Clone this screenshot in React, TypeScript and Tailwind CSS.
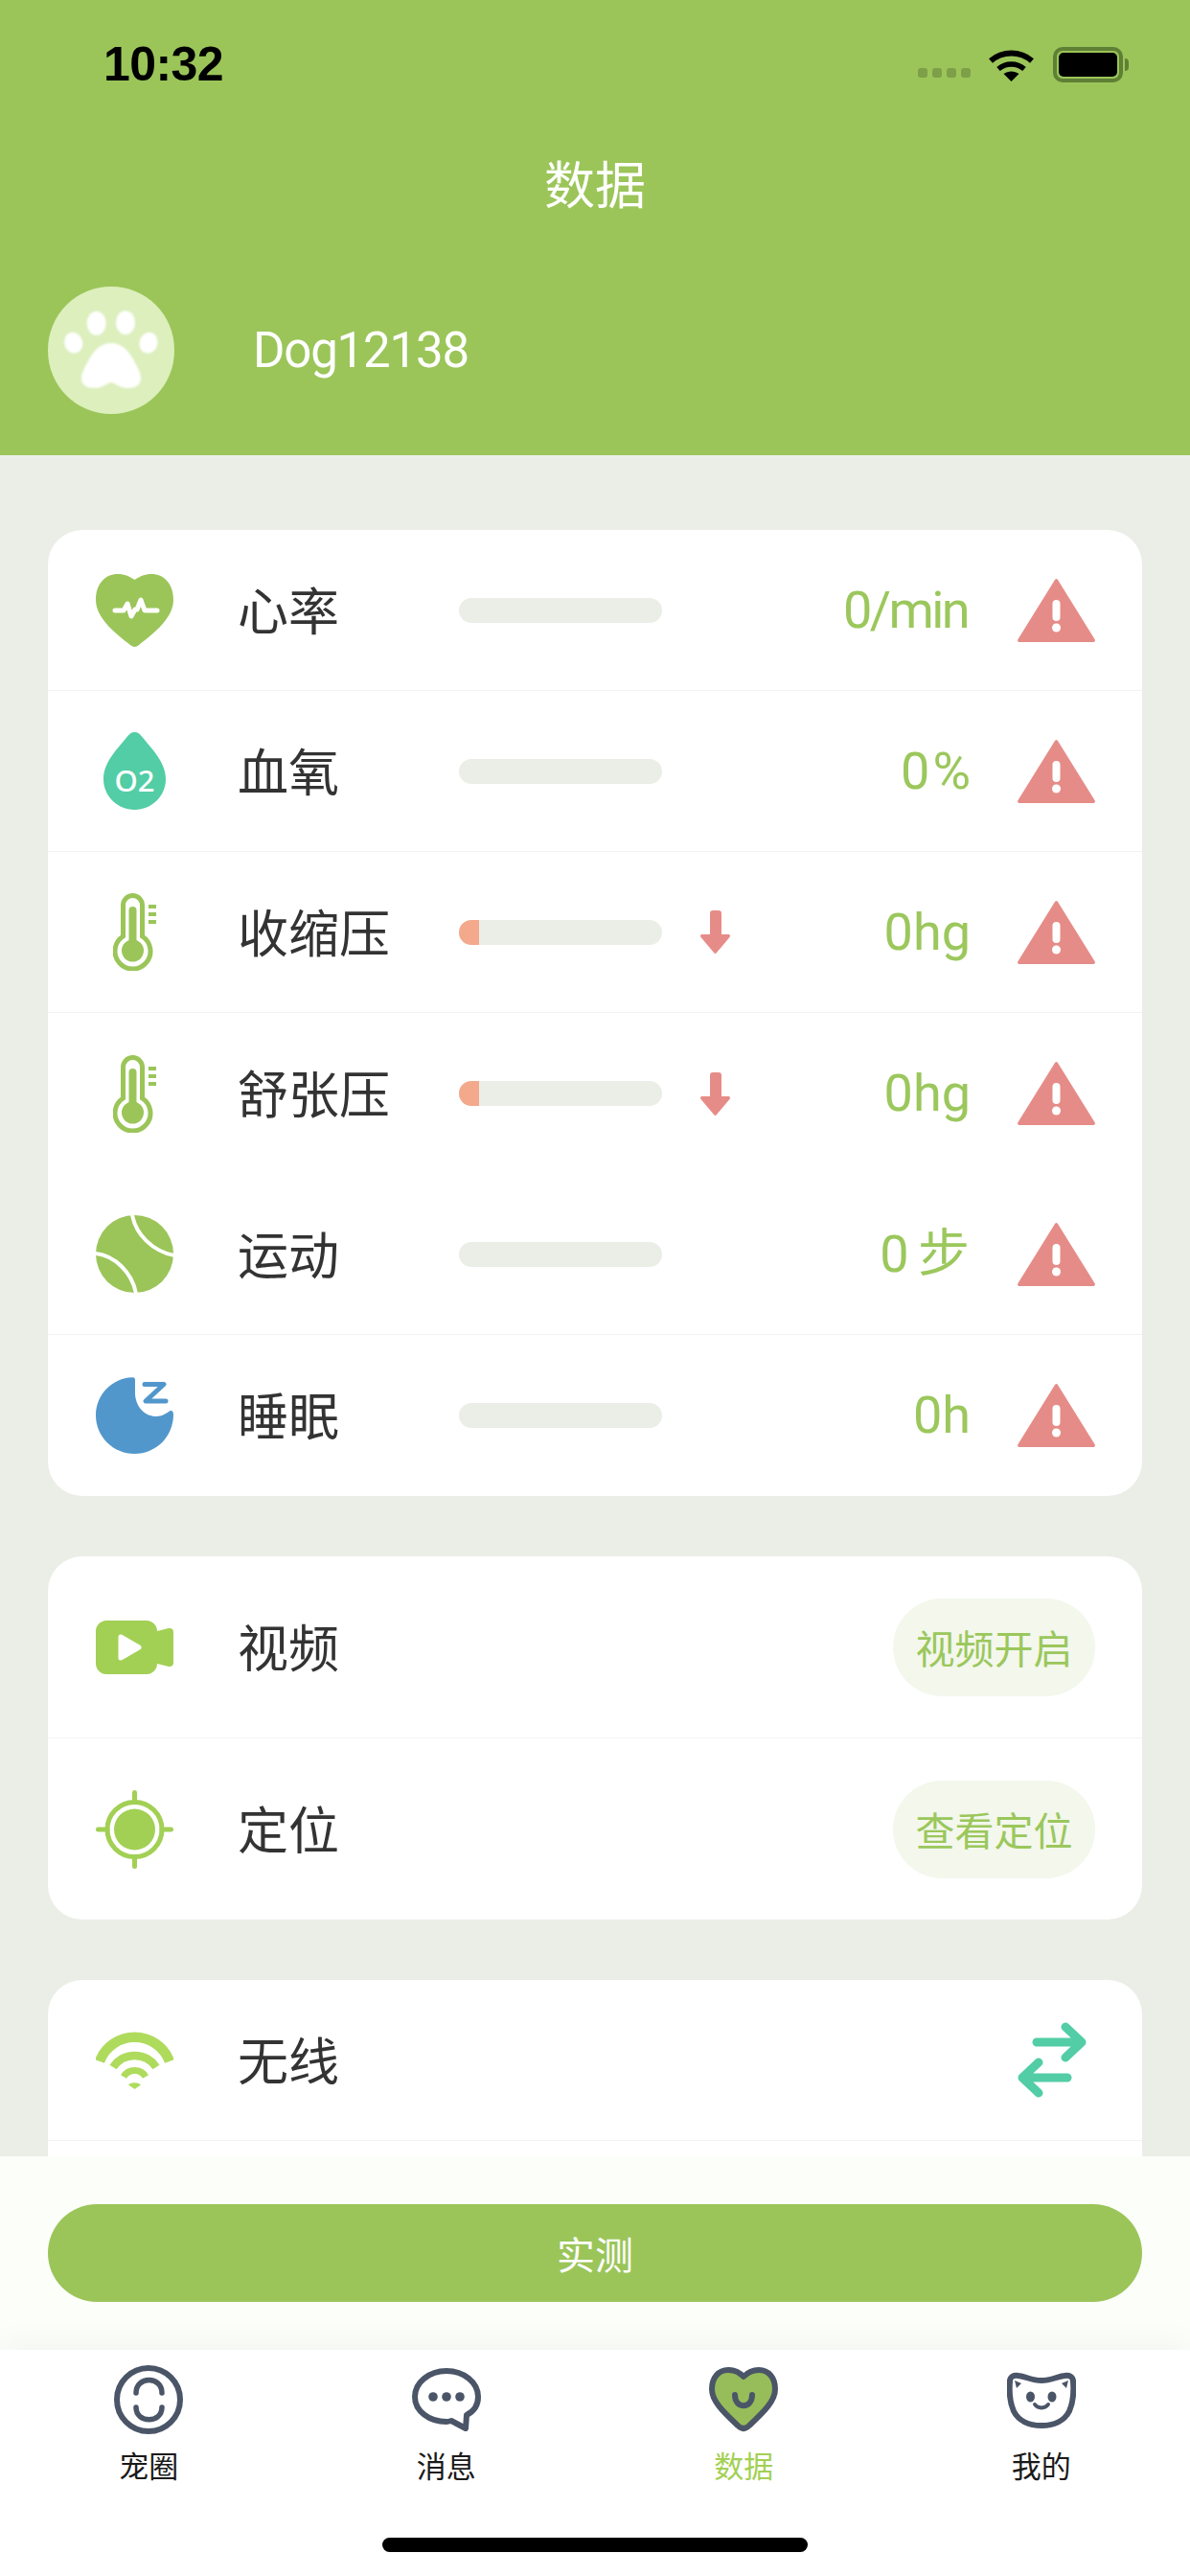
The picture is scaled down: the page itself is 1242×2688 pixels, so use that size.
import React from 'react';

const GREEN = '#9bc559';

const HeartIcon = () => (
  <svg width="81" height="76" viewBox="0 0 81 76">
    <path d="M40.5 6C34 1.5 28 0 23 0C10 0 0 10 0 27C0 45 18 60 36 74C39 76.5 42 76.5 45 74C63 60 81 45 81 27C81 10 71 0 58 0C53 0 47 1.5 40.5 6Z" fill={GREEN} />
    <path d="M20 38H29L33 31L37 44L41 37H43L47 27L51 38H64" fill="none" stroke="#fff" strokeWidth="5" strokeLinecap="round" strokeLinejoin="round" />
  </svg>
);

const DropIcon = () => (
  <svg width="65" height="81" viewBox="0 0 65 81">
    <path d="M32.5 0C29 0 27 2 25 4.5C15 17 0 31 0 49C0 67 15 81 32.5 81C50 81 65 67 65 49C65 31 50 17 40 4.5C38 2 36 0 32.5 0Z" fill="#52cda5" />
    <text x="32.5" y="62" textAnchor="middle" fill="#fff" fontSize="31" fontWeight="500" fontFamily="'Noto Sans', sans-serif">O2</text>
  </svg>
);

const ThermoIcon = () => (
  <svg width="45" height="81" viewBox="0 0 45 81">
    <path d="M10.5 45V12.5A10 10 0 0 1 30.5 12.5V45A18.5 18.5 0 1 1 10.5 45Z" fill="none" stroke={GREEN} strokeWidth="5" />
    <rect x="16.5" y="14" width="8" height="40" rx="4" fill={GREEN} />
    <circle cx="20.5" cy="60" r="11.5" fill={GREEN} />
    <rect x="37" y="12" width="8" height="4" fill={GREEN} />
    <rect x="37" y="20" width="8" height="4" fill={GREEN} />
    <rect x="37" y="28" width="8" height="4" fill={GREEN} />
  </svg>
);

const BallIcon = () => (
  <svg width="81" height="81" viewBox="0 0 81 81">
    <circle cx="40.5" cy="40.5" r="40.5" fill={GREEN} />
    <path d="M38 -1C41 20 60 38 82 42" fill="none" stroke="#fff" strokeWidth="4" />
    <path d="M-1 40C20 42 38 60 42 82" fill="none" stroke="#fff" strokeWidth="4" />
  </svg>
);

const MoonIcon = () => (
  <svg width="81" height="80" viewBox="0 0 81 80">
    <path d="M38 0.2C40 0 41 1 41 3V18C42 32 52 41 63 41C69 41 73 38 77 35.5C79.5 34 81 36 81 39C81 62 63 80 40.5 80C18 80 0 62 0 40C0 18 17 1 38 0.2Z" fill="#5297cc" />
    <path d="M51 7.5H71L52 25H73" fill="none" stroke="#5297cc" strokeWidth="5" strokeLinecap="round" strokeLinejoin="round" />
  </svg>
);

const VideoIcon = () => (
  <svg width="81" height="56" viewBox="0 0 81 56">
    <path d="M11 0H53C59 0 64 5 64 11L76 8C79 7.5 81 9 81 12V44C81 47 79 48.5 76 48L64 45C64 51 59 56 53 56H11C5 56 0 51 0 45V11C0 5 5 0 11 0Z" fill="#a2d054" />
    <path d="M26 17V39L45 28Z" fill="#fff" stroke="#fff" strokeWidth="5" strokeLinejoin="round" />
  </svg>
);

const TargetIcon = () => (
  <svg width="81" height="82" viewBox="0 0 81 82">
    <circle cx="40.5" cy="41" r="28.5" fill="none" stroke="#a2d054" strokeWidth="5" />
    <circle cx="40.5" cy="41" r="21.5" fill="#a2d054" />
    <path d="M40.5 2.5V12M40.5 70V79.5M2.5 41H12M69 41H78.5" fill="none" stroke="#a2d054" strokeWidth="5" strokeLinecap="round" />
  </svg>
);

const WifiIcon = () => (
  <svg width="81" height="60" viewBox="0 0 81 60" fill="none" stroke="#afdb5d">
    <path d="M4 31A39 39 0 0 1 77 31" strokeWidth="10.5" />
    <path d="M18 37A27 27 0 0 1 63 37" strokeWidth="8.5" />
    <path d="M29 47A13.4 13.4 0 0 1 52 47" strokeWidth="7" />
    <path d="M40.5 60L34 55.5C37 52.5 44 52.5 47 55.5Z" fill="#afdb5d" stroke="none" />
  </svg>
);

const SwapIcon = () => (
  <svg width="72" height="79" viewBox="0 0 72 79" fill="none" stroke="#52cda5" strokeWidth="9" strokeLinecap="round" strokeLinejoin="round">
    <path d="M20 21H67M50 5L67 21L50 37" />
    <path d="M52 58H5M22 42L5 58L22 74" />
  </svg>
);

const WarnIcon = () => (
  <svg width="81" height="66" viewBox="0 0 81 66">
    <path d="M39 1C40 -0.2 41 -0.2 42 1L80.5 63C81.5 64.5 80.5 66 79 66H2C0.5 66 -0.5 64.5 0.5 63Z" fill="#e68c88" />
    <rect x="36.5" y="22" width="8" height="22" rx="4" fill="#fff" />
    <circle cx="40.5" cy="51" r="4.5" fill="#fff" />
  </svg>
);

const DownIcon = () => (
  <svg width="31" height="45" viewBox="0 0 31 45">
    <path d="M10 3C10 1 11 0 13 0H19C21 0 22 1 22 3V25H29C31 25 31.5 26.5 30.5 28L17 44C16 45.2 15 45.2 14 44L0.5 28C-0.5 26.5 0 25 2 25H10Z" fill="#e68c88" />
  </svg>
);

const Paw = () => (
  <svg width="132" height="133" viewBox="0 0 132 133" className="blur-[1px]">
    <ellipse cx="50.7" cy="38.3" rx="10" ry="12.5" fill="#fff" />
    <ellipse cx="81" cy="37.7" rx="10" ry="12.5" fill="#fff" />
    <ellipse cx="26.7" cy="58.7" rx="9.5" ry="11" fill="#fff" transform="rotate(-15 26.7 58.7)" />
    <ellipse cx="105" cy="58.7" rx="9.5" ry="11" fill="#fff" transform="rotate(15 105 58.7)" />
    <path d="M66 59C56 59 48 66 43 76C38 85 35 90 35 96C35 103 41 106 49 106C56 106 60 102 66 100C72 102 76 106 83 106C91 106 97 103 97 96C97 90 94 85 89 76C84 66 76 59 66 59Z" fill="#fff" />
  </svg>
);

const SLATE = '#4b5568';

const CircleTab = () => (
  <svg width="72" height="72" viewBox="0 0 72 72" fill="none" stroke={SLATE} strokeLinecap="round">
    <circle cx="36" cy="36" r="33" strokeWidth="6" />
    <path d="M23 29C23 11 50 11 50 29" strokeWidth="5.5" />
    <path d="M23 44C23 61 50 61 50 44" strokeWidth="5.5" />
  </svg>
);

const ChatTab = () => (
  <svg width="72" height="66" viewBox="0 0 72 66">
    <path d="M41 55L56 63L57 49C65 45 69 38 69 30C69 15 54 3 36 3C18 3 3 15 3 30C3 45 18 56 36 56C38 56 39.5 55.5 41 55Z" fill="none" stroke={SLATE} strokeWidth="6" strokeLinejoin="round" />
    <circle cx="22" cy="30" r="4.8" fill={SLATE} />
    <circle cx="36" cy="30" r="4.8" fill={SLATE} />
    <circle cx="50" cy="30" r="4.8" fill={SLATE} />
  </svg>
);

const HeartTab = () => (
  <svg width="72" height="68" viewBox="0 0 72 68">
    <path d="M36 10C32 6 26 3 20 3C10 3 3 11 3 23C3 35 14 46 30 61C34 65 38 65 42 61C58 46 69 35 69 23C69 11 62 3 52 3C46 3 40 6 36 10Z" fill="#97bd5a" stroke={SLATE} strokeWidth="6" strokeLinejoin="round" />
    <path d="M27 29C27 44 45 44 45 29" fill="none" stroke={SLATE} strokeWidth="6" strokeLinecap="round" />
  </svg>
);

const CatTab = () => (
  <svg width="72" height="59" viewBox="0 0 72 59">
    <path d="M3 10C3 5 7 3 12 4C20 5 26 9 36 9C46 9 52 5 60 4C65 3 69 5 69 10C70 22 69 32 65 41C60 51 49 56 36 56C23 56 12 51 7 41C3 32 2 22 3 10Z" fill="none" stroke={SLATE} strokeWidth="6" strokeLinejoin="round" />
    <path d="M8 9L15 12L10 17Z" fill={SLATE} />
    <path d="M64 9L57 12L62 17Z" fill={SLATE} />
    <ellipse cx="24.5" cy="26" rx="4.5" ry="5.5" fill={SLATE} />
    <ellipse cx="47" cy="26" rx="4.5" ry="5.5" fill={SLATE} />
    <path d="M29 34C32 38.5 40 38.5 43 34" fill="none" stroke={SLATE} strokeWidth="4" strokeLinecap="round" />
  </svg>
);

const metrics = [
  { icon: <HeartIcon />, label: '心率', value: '0/min', spacing: 'tracking-[-2.6px]' },
  { icon: <DropIcon />, label: '血氧', value: '0%', spacing: 'tracking-[3px] -mr-[6px]' },
  { icon: <ThermoIcon />, label: '收缩压', value: '0hg', spacing: '-mr-[3px]', low: true },
  { icon: <ThermoIcon />, label: '舒张压', value: '0hg', spacing: '-mr-[3px]', low: true, noLine: true },
  { icon: <BallIcon />, label: '运动', value: '0 步', spacing: 'tracking-[-2px]' },
  { icon: <MoonIcon />, label: '睡眠', value: '0h', spacing: '-mr-[3px]' },
];

const tabs = [
  { icon: <CircleTab />, label: '宠圈' },
  { icon: <ChatTab />, label: '消息' },
  { icon: <HeartTab />, label: '数据', active: true },
  { icon: <CatTab />, label: '我的' },
];

const IconBox = ({ children }: { children: React.ReactNode }) => (
  <div className="w-[81px] flex items-center justify-center shrink-0">{children}</div>
);

export default function App() {
  return (
    <div className="w-[1242px] h-[2688px] flex flex-col overflow-hidden bg-[#ebeee7] font-['Noto_Sans_CJK_SC',sans-serif]">
      {/* Header */}
      <div className="h-[475px] shrink-0 bg-[#9bc559]">
        <div className="h-[100px] pt-[34px] pl-[108px] flex items-center">
          <span className="font-['Liberation_Sans',sans-serif] font-bold text-[50px] tracking-[-0.6px] leading-none text-black">10:32</span>
          <div className="ml-auto flex items-end gap-[5px] h-[10px] mt-[18px]">
            <i className="w-[10px] h-[10px] rounded-[3px] bg-[#7c9f48]" />
            <i className="w-[10px] h-[10px] rounded-[3px] bg-[#7c9f48]" />
            <i className="w-[10px] h-[10px] rounded-[3px] bg-[#7c9f48]" />
            <i className="w-[10px] h-[10px] rounded-[3px] bg-[#7c9f48]" />
          </div>
          <svg width="47" height="36" viewBox="0 0 47 36" className="ml-[19px]" fill="none" stroke="#000">
            <path d="M2 14.5A33 33 0 0 1 45 14.5" strokeWidth="6" />
            <path d="M10 23A21 21 0 0 1 37 23" strokeWidth="5.5" />
            <path d="M23.5 36L15.5 28C20 24.5 27 24.5 31.5 28Z" fill="#000" stroke="none" />
          </svg>
          <div className="ml-[20px] mr-[70px] w-[73px] h-[37px] rounded-[10px] border-[4px] border-[#5f7f35] p-[2px] relative">
            <div className="w-full h-full rounded-[5px] bg-black" />
            <div className="absolute left-[71px] top-[8px] w-[4px] h-[13px] rounded-r-full bg-[#5f7f35]" />
          </div>
        </div>
        <div className="mt-[47px] h-[88px] flex items-center justify-center text-[53px] text-white">数据</div>
        <div className="mt-[64px] pl-[50px] flex items-center">
          <div className="w-[132px] h-[133px] rounded-full bg-[#dcefbd] flex items-center justify-center">
            <Paw />
          </div>
          <span className="ml-[82px] font-['Roboto',sans-serif] text-[51px] tracking-[-1.2px] leading-none text-white">Dog12138</span>
        </div>
      </div>

      {/* Scroll area */}
      <div className="flex-1 min-h-0 overflow-hidden px-[50px] pt-[78px] flex flex-col gap-[63px]">
        <div className="bg-white rounded-[36px] shrink-0">
          {metrics.map((m, i) => (
            <div key={m.label} className={`h-[168px] pl-[50px] pr-[49px] flex items-center ${m.noLine || i === metrics.length - 1 ? '' : 'border-b border-[#f3f4f1]'}`}>
              <IconBox>{m.icon}</IconBox>
              <span className="ml-[67px] w-[231px] shrink-0 pb-[3px] text-[53px] leading-none text-[#333]">{m.label}</span>
              <div className="w-[212px] h-[26px] rounded-full bg-[#ebeee7] overflow-hidden shrink-0">
                {m.low && <div className="w-[21px] h-full bg-[#f4a98d]" />}
              </div>
              {m.low && (
                <div className="ml-[40px]">
                  <DownIcon />
                </div>
              )}
              <span className={`flex-1 text-right font-['Roboto','Noto_Sans_CJK_SC',sans-serif] text-[54px] leading-none text-[#9bc75c] ${m.spacing}`}>{m.value}</span>
              <div className="ml-[52px]">
                <WarnIcon />
              </div>
            </div>
          ))}
        </div>

        <div className="bg-white rounded-[36px] shrink-0">
          <div className="h-[190px] pl-[50px] pr-[49px] flex items-center border-b border-[#f3f4f1]">
            <IconBox><VideoIcon /></IconBox>
            <span className="ml-[67px] pb-[3px] text-[53px] leading-none text-[#333]">视频</span>
            <div className="ml-auto w-[211px] h-[102px] rounded-full bg-[#f3f7ec] flex items-center justify-center text-[41px] text-[#9bc75c]">视频开启</div>
          </div>
          <div className="h-[189px] pl-[50px] pr-[49px] flex items-center">
            <IconBox><TargetIcon /></IconBox>
            <span className="ml-[67px] pb-[3px] text-[53px] leading-none text-[#333]">定位</span>
            <div className="ml-auto w-[211px] h-[102px] rounded-full bg-[#f3f7ec] flex items-center justify-center text-[41px] text-[#9bc75c]">查看定位</div>
          </div>
        </div>

        <div className="bg-white rounded-t-[36px] shrink-0 h-[300px]">
          <div className="h-[168px] pl-[50px] pr-[58px] flex items-center border-b border-[#f3f4f1]">
            <IconBox><WifiIcon /></IconBox>
            <span className="ml-[67px] pb-[3px] text-[53px] leading-none text-[#333]">无线</span>
            <div className="ml-auto">
              <SwapIcon />
            </div>
          </div>
        </div>
      </div>

      {/* Action */}
      <div className="h-[202px] shrink-0 bg-[#fcfef9] pt-[50px] px-[50px]">
        <div className="h-[102px] rounded-full bg-[#9bc559] flex items-center justify-center text-[40px] text-white">实测</div>
      </div>

      {/* Tab bar */}
      <div className="h-[236px] shrink-0 bg-white relative shadow-[0_0_36px_rgba(0,0,0,0.06)]">
        <div className="grid grid-cols-4 pt-[16px]">
          {tabs.map((t) => (
            <div key={t.label} className="flex flex-col items-center">
              <div className="h-[72px] flex items-center justify-center">{t.icon}</div>
              <span className={`mt-[14px] text-[31px] leading-[36px] ${t.active ? 'text-[#a2d054]' : 'text-[#1a1a1a]'}`}>{t.label}</span>
            </div>
          ))}
        </div>
        <div className="mt-[58px] flex justify-center">
          <div className="w-[444px] h-[15px] rounded-full bg-black" />
        </div>
      </div>
    </div>
  );
}
